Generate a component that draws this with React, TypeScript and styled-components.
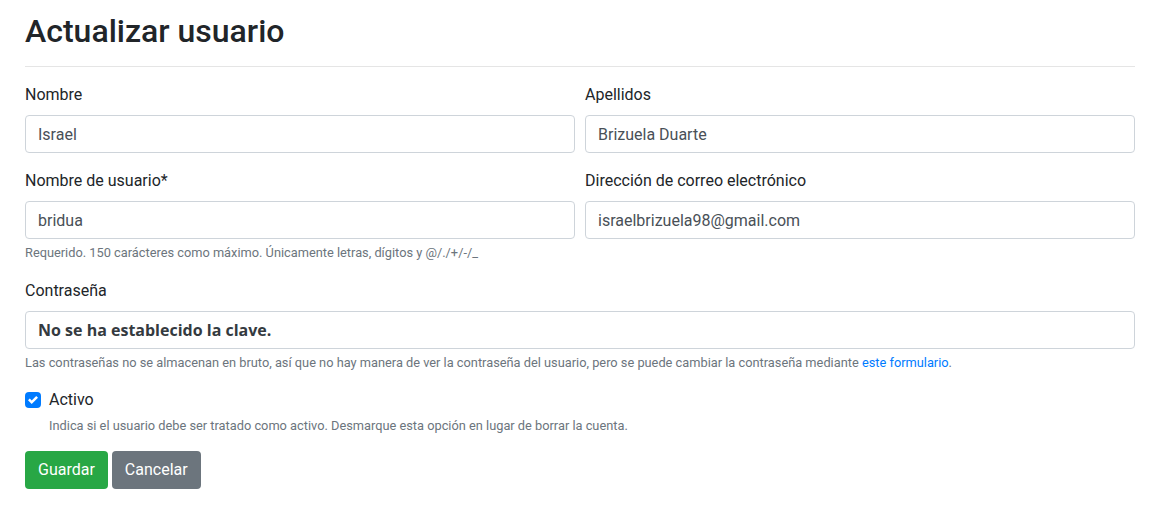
import React from 'react';
import styled, { createGlobalStyle } from 'styled-components';

const GlobalStyle = createGlobalStyle`
  html, body {
    margin: 0;
    background: #fff;
  }
  body {
    font-family: Roboto, 'Liberation Sans', sans-serif;
    font-size: 16px;
    line-height: 1.5;
    color: #212529;
  }
  * {
    box-sizing: border-box;
  }
`;

const Container = styled.div`
  width: 1110px;
  margin-left: 25px;
  padding-top: 12px;
`;

const Title = styled.h1`
  margin: 0 0 8px;
  font-size: 32px;
  font-weight: 500;
  line-height: 1.2;
`;

const Divider = styled.hr`
  margin: 16px 0 16px;
  border: 0;
  border-top: 1px solid rgba(0, 0, 0, 0.1);
`;

const FormRow = styled.div`
  display: grid;
  grid-template-columns: 1fr 1fr;
  column-gap: 10px;
`;

const Group = styled.div`
  margin-bottom: 16px;
`;

const Label = styled.label`
  display: block;
  margin-bottom: 8px;
`;

const Input = styled.input`
  display: block;
  width: 100%;
  height: 38px;
  padding: 6px 12px;
  font: inherit;
  color: #495057;
  background: #fff;
  border: 1px solid #ced4da;
  border-radius: 4px;
  outline: none;
`;

const StaticField = styled.div`
  height: 38px;
  padding: 6px 12px;
  border: 1px solid #ced4da;
  border-radius: 4px;
  font-family: 'Open Sans', Roboto, sans-serif;
  font-weight: 700;
  color: #343a40;
`;

const Help = styled.small`
  display: block;
  margin-top: 4px;
  font-size: 12.8px;
  color: #6c757d;
`;

const Link = styled.a`
  color: #007bff;
  text-decoration: none;
`;

const CheckRow = styled.label`
  display: flex;
  align-items: center;
  gap: 8px;
`;

const CheckBox = styled.span`
  width: 16px;
  height: 16px;
  border-radius: 4px;
  background: #007bff;
  display: flex;
  align-items: center;
  justify-content: center;
`;

const CheckHelp = styled(Help)`
  padding-left: 24px;
`;

const Actions = styled.div`
  display: flex;
  gap: 4px;
`;

const Button = styled.button<{ $variant: 'success' | 'secondary' }>`
  height: 38px;
  padding: 6px 12px;
  font: inherit;
  color: #fff;
  border: 1px solid transparent;
  border-radius: 4px;
  background: ${(p) => (p.$variant === 'success' ? '#28a745' : '#6c757d')};
`;

export default function App() {
  return (
    <Container>
      <GlobalStyle />
      <Title>Actualizar usuario</Title>
      <Divider />
      <FormRow>
        <Group>
          <Label>Nombre</Label>
          <Input defaultValue="Israel" />
        </Group>
        <Group>
          <Label>Apellidos</Label>
          <Input defaultValue="Brizuela Duarte" />
        </Group>
      </FormRow>
      <FormRow>
        <Group>
          <Label>Nombre de usuario*</Label>
          <Input defaultValue="bridua" />
          <Help>Requerido. 150 carácteres como máximo. Únicamente letras, dígitos y @/./+/-/_</Help>
        </Group>
        <Group>
          <Label>Dirección de correo electrónico</Label>
          <Input defaultValue="israelbrizuela98@gmail.com" />
        </Group>
      </FormRow>
      <Group>
        <Label>Contraseña</Label>
        <StaticField>No se ha establecido la clave.</StaticField>
        <Help>
          Las contraseñas no se almacenan en bruto, así que no hay manera de ver la contraseña del usuario, pero se
          puede cambiar la contraseña mediante <Link href="#">este formulario</Link>.
        </Help>
      </Group>
      <Group>
        <CheckRow>
          <CheckBox>
            <svg width="10" height="10" viewBox="0 0 8 8">
              <path fill="#fff" d="M6.564.75l-3.59 3.612-1.538-1.55L0 4.26l2.974 2.99L8 2.193z" />
            </svg>
          </CheckBox>
          Activo
        </CheckRow>
        <CheckHelp>Indica si el usuario debe ser tratado como activo. Desmarque esta opción en lugar de borrar la cuenta.</CheckHelp>
      </Group>
      <Actions>
        <Button $variant="success">Guardar</Button>
        <Button $variant="secondary">Cancelar</Button>
      </Actions>
    </Container>
  );
}
